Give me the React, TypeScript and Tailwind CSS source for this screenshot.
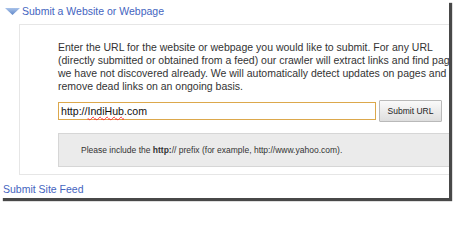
import React from "react";

const font = { fontFamily: '"Liberation Sans", Arial, sans-serif' };

const Caret = () => (
  <svg width="15" height="7" viewBox="0 0 15 7" className="shrink-0">
    <defs>
      <linearGradient id="cg" x1="0" y1="0" x2="0" y2="1">
        <stop offset="0" stopColor="#a9c3ea" />
        <stop offset="1" stopColor="#5f86c8" />
      </linearGradient>
    </defs>
    <polygon points="0,0 15,0 7.5,7" fill="url(#cg)" />
  </svg>
);

export default function App() {
  return (
    <div className="w-[454px] h-[203px] bg-white" style={font}>
      <div className="w-[449px] h-[198px] bg-white overflow-hidden shadow-[3px_3px_1px_rgba(40,40,40,0.85)] relative">
        <div className="flex items-center h-[24px] pl-[5px] gap-[2px] pb-[1px]">
          <Caret />
          <span className="text-[10.5px] text-[#4464c0] leading-none">
            Submit a Website or Webpage
          </span>
        </div>
        <div className="ml-[19px] w-[450px] h-[151px] border border-[#e6e6e6] pt-[16px] pl-[38px]">
          <p className="text-[10.5px] leading-[13px] text-[#333] whitespace-nowrap">
            Enter the URL for the website or webpage you would like to submit. For any URL
            <br />
            (directly submitted or obtained from a feed) our crawler will extract links and find pages
            <br />
            we have not discovered already. We will automatically detect updates on pages and
            <br />
            remove dead links on an ongoing basis.
          </p>
          <div className="flex items-center gap-[3px] mt-[7px]">
            <div className="w-[318px] h-[18px] border border-[#dca84c] flex items-center pl-[2px] bg-white">
              <span className="text-[10.6px] text-[#111] leading-none">
                http://
                <span className="underline decoration-wavy decoration-red-500 decoration-[0.5px] underline-offset-[1px]">
                  IndiHub
                </span>
                .com
              </span>
            </div>
            <button className="w-[63px] h-[22px] border border-[#b9b9b9] rounded-[1px] bg-gradient-to-b from-[#fafafa] to-[#dedede] text-[8.5px] text-[#222] leading-none">
              Submit URL
            </button>
          </div>
          <div className="mt-[11px] h-[34px] border border-[#d6d6d6] bg-[#ebebeb] flex items-center pl-[22px]">
            <span className="text-[8.5px] text-[#333] leading-none">
              Please include the <b className="font-bold">http:</b>// prefix (for example, http://www.yahoo.com).
            </span>
          </div>
        </div>
        <div className="flex pl-[3px] pt-[9px] leading-none">
          <span className="text-[10.5px] text-[#4464c0] leading-none">Submit Site Feed</span>
        </div>
      </div>
    </div>
  );
}
